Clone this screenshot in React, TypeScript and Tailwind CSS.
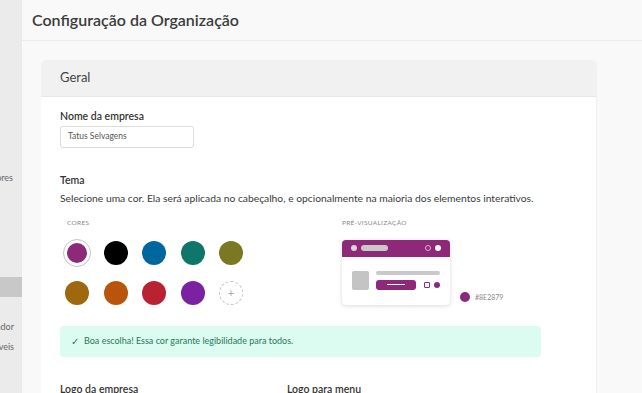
import React from 'react';

const swatchesTop = ['#8E2879', '#000000', '#00679E', '#0E766B', '#7A7822'];
const swatchesBottom = ['#A0680E', '#B8540C', '#B82233', '#7B22A3'];

const Swatch = ({ color, selected }: { color: string; selected?: boolean }) => (
  <div className="w-[28px] h-[28px] flex items-center justify-center">
    {selected ? (
      <div className="w-[28px] h-[28px] rounded-full border border-[#c4c4c4] flex items-center justify-center">
        <div className="w-[24px] h-[24px] rounded-full border-2 border-white" style={{ backgroundColor: color }} />
      </div>
    ) : (
      <div className="w-[24px] h-[24px] rounded-full" style={{ backgroundColor: color }} />
    )}
  </div>
);

const Preview = () => (
  <div className="w-[108px] h-[65px] rounded-[4px] bg-white shadow-[0_1px_4px_rgba(0,0,0,0.15)] overflow-hidden flex flex-col">
    <div className="h-[17px] bg-[#8E2879] flex items-center px-[9px] gap-[4px]">
      <div className="w-[6px] h-[6px] rounded-full bg-[#d6d6d6]" />
      <div className="w-[27px] h-[6px] rounded-full bg-[#c9c9c9]" />
      <div className="flex-1" />
      <div className="w-[6px] h-[6px] rounded-full border border-[#d8b3cf]" />
      <div className="w-[6px] h-[6px] rounded-full bg-white" />
    </div>
    <div className="flex-1 flex px-[10px] pt-[14px] gap-[7px]">
      <div className="w-[19px] h-[19px] rounded-[2px] bg-[#c4c4c4]" />
      <div className="flex-1 flex flex-col gap-[5px]">
        <div className="h-[4px] rounded-full bg-[#c9c9c9]" />
        <div className="flex items-center gap-[4px]">
          <div className="w-[40px] h-[10px] rounded-[3px] bg-[#8E2879] flex items-center justify-center">
            <div className="w-[18px] h-[1px] bg-white" />
          </div>
          <div className="flex-1" />
          <div className="w-[6px] h-[6px] rounded-[1px] border border-[#8E2879]" />
          <div className="w-[6px] h-[6px] rounded-full bg-[#8E2879]" />
        </div>
      </div>
    </div>
  </div>
);

export default function App() {
  return (
    <div className="w-[642px] h-[393px] overflow-hidden flex bg-[#f9f9f9] text-[#333]" style={{ fontFamily: 'Lato, "Noto Sans", sans-serif' }}>
      {/* sidebar, mostly off screen */}
      <div className="w-[22px] shrink-0 bg-[#ebebeb] flex flex-col text-[9px] text-[#666]">
        <div className="h-[171px]" />
        <div className="h-[14px] flex justify-end overflow-hidden pr-[9px] whitespace-nowrap">Colaboradores</div>
        <div className="h-[92px]" />
        <div className="h-[20px] bg-[#c8c8c8]" />
        <div className="h-[23px]" />
        <div className="h-[14px] flex justify-end overflow-hidden pr-[8px] whitespace-nowrap">Administrador</div>
        <div className="h-[6px]" />
        <div className="h-[14px] flex justify-end overflow-hidden pr-[8px] whitespace-nowrap">Responsáveis</div>
      </div>

      <div className="flex-1 flex flex-col">
        <div className="h-[41px] shrink-0 border-b border-[#ececec] flex items-center px-[10px]">
          <h1 className="text-[16px] font-semibold text-[#3b3b3b]">Configuração da Organização</h1>
        </div>

        <div className="pl-[19px] pt-[19px] pr-[46px]">
          <div className="rounded-t-[5px] overflow-hidden bg-white shadow-[1px_0_2px_rgba(0,0,0,0.04)]">
            <div className="h-[37px] bg-[#f1f1f1] border-b border-[#e8e8e8] flex items-center px-[19px] text-[13px] text-[#444]">
              Geral
            </div>

            <div className="px-[19px] pt-[12px] pb-[20px]">
              <div className="text-[10.5px] font-semibold text-[#333]">Nome da empresa</div>
              <div className="mt-[1px] w-[134px] h-[22px] border border-[#dcdcdc] rounded-[3px] flex items-center px-[7px] text-[8.5px] text-[#555]">
                Tatus Selvagens
              </div>

              <div className="mt-[25px] text-[10.5px] font-semibold text-[#333]">Tema</div>
              <div className="mt-[2px] text-[10.3px] text-[#3a3a3a]">
                Selecione uma cor. Ela será aplicada no cabeçalho, e opcionalmente na maioria dos elementos interativos.
              </div>

              <div className="mt-[12px] flex">
                <div className="w-[282px]">
                  <div className="pl-[7px] text-[6.5px] text-[#888] tracking-[0.3px]">CORES</div>
                  <div className="mt-[11px] flex flex-col gap-[12px] pl-[3px]">
                    <div className="flex gap-[10.5px]">
                      {swatchesTop.map((c, i) => (
                        <Swatch key={c} color={c} selected={i === 0} />
                      ))}
                    </div>
                    <div className="flex gap-[10.5px]">
                      {swatchesBottom.map((c) => (
                        <Swatch key={c} color={c} />
                      ))}
                      <div className="w-[28px] h-[28px] flex items-center justify-center">
                        <div className="w-[24px] h-[24px] rounded-full border border-dashed border-[#c4c4c4] flex items-center justify-center text-[11px] text-[#aaa] leading-none">
                          +
                        </div>
                      </div>
                    </div>
                  </div>
                </div>

                <div>
                  <div className="text-[6.5px] text-[#888] tracking-[0.3px]">PRÉ-VISUALIZAÇÃO</div>
                  <div className="mt-[12px] flex items-end gap-[10px]">
                    <Preview />
                    <div className="flex items-center gap-[5px] mb-[2px]">
                      <div className="w-[10px] h-[10px] rounded-full bg-[#8E2879]" />
                      <span className="text-[7px] text-[#888]">#8E2879</span>
                    </div>
                  </div>
                </div>
              </div>

              <div className="mt-[19px] w-[481px] h-[31px] rounded-[4px] bg-[#dcfcf2] flex items-center px-[11px] gap-[5px] text-[9px] text-[#1f7a58]">
                <span className="text-[10px]">✓</span>
                <span>Boa escolha! Essa cor garante legibilidade para todos.</span>
              </div>

              <div className="mt-[25px] flex text-[10.5px] font-semibold text-[#333]">
                <div className="w-[227px]">Logo da empresa</div>
                <div>Logo para menu</div>
              </div>
            </div>
          </div>
        </div>
      </div>
    </div>
  );
}
